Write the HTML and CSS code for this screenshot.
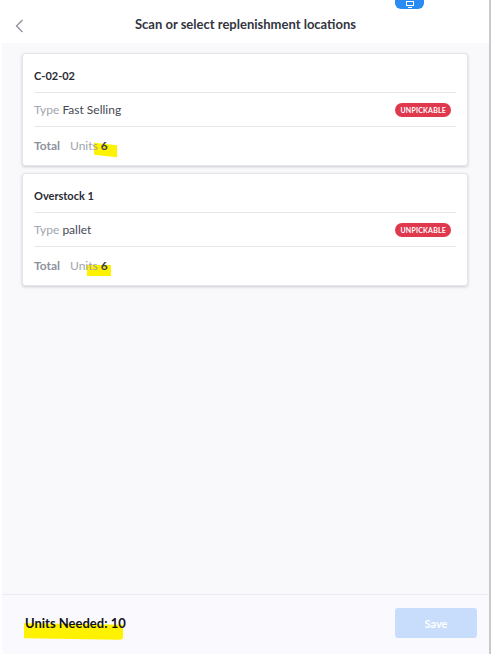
FILE: index.html
```html
<html>

<head>
  <link rel="stylesheet" href="styles.css">
</head>

<body>
  <div class="app">
    <!-- Top bar -->
    <div class="topbar">
      <span class="back">
        <svg width="9" height="14" viewBox="0 0 9 14"><path d="M7.5 1 L1.5 7 L7.5 13" fill="none" stroke="#8d8f99" stroke-width="1.3" /></svg>
      </span>
      <h1 class="title">Scan or select replenishment locations</h1>
      <span class="cast">
        <svg width="10" height="7" viewBox="0 0 10 7"><rect x="1.5" y="0.5" width="7" height="4" fill="none" stroke="#fff" stroke-width="1" /><path d="M3 6.5 H7" stroke="#fff" stroke-width="1" /></svg>
      </span>
    </div>

    <!-- Location list -->
    <div class="content">
      <div class="card">
        <div class="card-title">C-02-02</div>
        <div class="row">
          <span><span class="label">Type</span> <span class="value">Fast Selling</span></span>
          <span class="badge">UNPICKABLE</span>
        </div>
        <div class="row total">
          <span class="total-label">Total</span>
          <span class="units">Units <b>6</b><i class="mark mark-a"></i></span>
        </div>
      </div>

      <div class="card">
        <div class="card-title">Overstock 1</div>
        <div class="row">
          <span><span class="label">Type</span> <span class="value">pallet</span></span>
          <span class="badge">UNPICKABLE</span>
        </div>
        <div class="row total">
          <span class="total-label">Total</span>
          <span class="units">Units <b>6</b><i class="mark mark-b"></i></span>
        </div>
      </div>
    </div>

    <!-- Footer -->
    <div class="footer">
      <span class="needed">Units Needed: 10<i class="mark mark-c"></i></span>
      <button class="save" disabled>Save</button>
    </div>
  </div>
</body>

</html>
```

FILE: styles.css
```css
* {
  box-sizing: border-box;
}

body {
  margin: 0;
  background: #ffffff;
  font-family: Lato, "Open Sans", Arial, sans-serif;
}

.app {
  margin-left: 2px;
  width: 489px;
  height: 654px;
  display: flex;
  flex-direction: column;
  border-right: 2px solid #c9c9cc;
}

.topbar {
  position: relative;
  height: 43px;
  background: #ffffff;
  display: flex;
  align-items: center;
  justify-content: center;
}

.back {
  position: absolute;
  left: 13px;
  top: 19px;
}

.title {
  margin: 4px 0 0 0;
  font-size: 13px;
  font-weight: 700;
  color: #33353f;
}

.cast {
  position: absolute;
  left: 393px;
  top: 0;
  width: 29px;
  height: 9px;
  background: #2a8bf2;
  border-radius: 0 0 6px 6px;
  display: flex;
  justify-content: center;
  align-items: center;
}

.content {
  flex: 1;
  background: #f9f9fc;
  padding: 10px 21px 0 20px;
  display: flex;
  flex-direction: column;
  gap: 7px;
}

.card {
  position: relative;
  z-index: 0;
  background: #ffffff;
  border: 1px solid #e4e5ea;
  border-radius: 3px;
  box-shadow: 0 1px 3px rgba(0, 0, 0, 0.18);
  padding: 0 11px;
}

.card-title {
  height: 39px;
  display: flex;
  align-items: center;
  padding-top: 4px;
  font-size: 11px;
  font-weight: 700;
  color: #2a2c35;
  border-bottom: 1px solid #e6e7ec;
}

.row {
  height: 34px;
  display: flex;
  align-items: center;
  justify-content: space-between;
  font-size: 12px;
  border-bottom: 1px solid #e6e7ec;
}

.label {
  color: #a2a4ae;
}

.value {
  color: #464852;
}

.badge {
  background: #e0384d;
  color: #ffffff;
  font-size: 7px;
  font-weight: 700;
  letter-spacing: 0.2px;
  padding: 3px 5px;
  border-radius: 7px;
  margin-right: 5px;
}

.row.total {
  height: 38px;
  border-bottom: none;
  justify-content: flex-start;
  padding-bottom: 2px;
}

.total-label {
  font-weight: 700;
  color: #8e919c;
  width: 36px;
}

.units {
  position: relative;
  color: #a2a4ae;
}

.units b {
  color: #3e4049;
}

.mark {
  position: absolute;
  background: #fff200;
  z-index: -1;
}

.mark-a {
  left: 24px;
  top: 6px;
  width: 23px;
  height: 12px;
  transform: skewY(6deg);
}

.mark-b {
  left: 17px;
  top: 7px;
  width: 24px;
  height: 11px;
}

.footer {
  position: relative;
  z-index: 0;
  height: 60px;
  border-top: 1px solid #ececf1;
  background: #fafafe;
  display: flex;
  align-items: center;
  justify-content: space-between;
  padding: 0 12px 3px 23px;
}

.needed {
  position: relative;
  font-size: 13px;
  font-weight: 700;
  color: #111216;
}

.mark-c {
  left: -1px;
  top: 9px;
  width: 99px;
  height: 15px;
  border-radius: 0 0 3px 0;
  transform: skewY(1deg);
}

.save {
  width: 82px;
  height: 30px;
  border: none;
  border-radius: 3px;
  background: #c8dcfc;
  color: #ffffff;
  font-family: inherit;
  font-size: 11px;
  font-weight: 700;
}
```
